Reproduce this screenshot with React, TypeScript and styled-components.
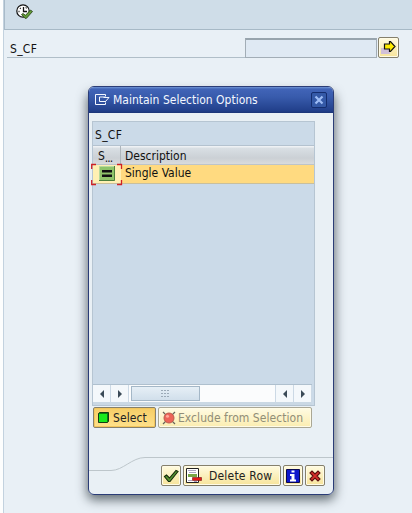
import React from "react";
import styled, { createGlobalStyle } from "styled-components";

const Global = createGlobalStyle`
  * { box-sizing: border-box; }
  body { margin: 0; background: #fff; overflow: hidden; }
  svg { display: block; flex: none; }
`;

const Page = styled.div`
  position: relative;
  width: 412px;
  height: 513px;
  padding-left: 3px;
  font: 12px/16px "DejaVu Sans Condensed", "DejaVu Sans", sans-serif;
  font-stretch: condensed;
  color: #111;
  background: #fdfefe;
`;
const Screen = styled.div`
  height: 100%;
  border-left: 1px solid #c3d2df;
  background: #e9f0f6;
`;
const Toolbar = styled.header`
  height: 30px;
  padding: 4px 0 0 11px;
  background: #cfdde8;
  border-left: 1px solid #a9bbc9;
  border-bottom: 1px solid #a7b9c6;
`;
const Criteria = styled.div`
  display: flex;
  padding: 7px 0 0 3px;
`;
const FieldLabel = styled.label`
  width: 238px;
  height: 21px;
  padding: 4px 0 0 3px;
  border-bottom: 1px solid #b0bec8;
  letter-spacing: 0.3px;
`;
const Field = styled.input`
  width: 132px;
  height: 20px;
  margin: 1px 1px 0 0;
  padding: 0;
  border: 1px solid #a2adb6;
  border-top: 2px solid #98a4ad;
  border-radius: 0;
  background: #dfe9f3;
`;
const Button = styled.button<{ $w: number; $on?: boolean; $muted?: boolean; $gap?: number; $pad?: number }>`
  width: ${p => p.$w}px;
  height: 21px;
  flex: none;
  display: flex;
  align-items: center;
  gap: ${p => p.$gap ?? 0}px;
  padding: 0 0 0 ${p => p.$pad ?? 1}px;
  border: 1px solid ${p => (p.$muted ? "#aaa794" : "#85806c")};
  border-radius: 2px;
  background: ${p => p.$on
    ? "linear-gradient(#f5cd65, #ffe18b)"
    : p.$muted ? "linear-gradient(#fffbe3, #fbedb0)" : "linear-gradient(#fffbe0, #f7e49a)"};
  box-shadow: inset 0 0 0 1px ${p => (p.$on ? "#f3c65c" : "#fffbe6")};
  color: ${p => (p.$muted ? "#918e78" : "#222")};
  font: 12px/16px "DejaVu Sans Condensed", "DejaVu Sans", sans-serif;
  font-stretch: condensed;
  white-space: nowrap;
`;
const Caption = styled.span<{ $track?: number }>`
  letter-spacing: ${p => p.$track ?? 0}px;
  white-space: nowrap;
  padding-top: 1px;
`;

const Dialog = styled.section`
  position: absolute;
  left: 88px;
  top: 86px;
  width: 246px;
  height: 409px;
  display: flex;
  flex-direction: column;
  border: 1px solid #2b3d77;
  border-radius: 6px;
  overflow: hidden;
  background: #e9f0f5;
`;
const DialogShadow = styled.div`
  position: absolute;
  left: 88px;
  top: 90px;
  width: 246px;
  height: 405px;
  border-radius: 6px;
  box-shadow: 0 4px 11px 1px rgba(55, 65, 72, 0.75);
`;
const TitleBar = styled.header`
  height: 26px;
  flex: none;
  display: flex;
  align-items: center;
  padding: 0 6px 0 6px;
  color: #f3f7ff;
  background: linear-gradient(#7094d4 0, #4164b8 2px, #385bac 10px, #213f8a 24px, #1b3577);
`;
const TitleText = styled.h1`
  flex: 1;
  margin: 0 0 0 3px;
  font: inherit;
  white-space: nowrap;
`;
const CloseButton = styled.button`
  width: 16px;
  height: 16px;
  padding: 0;
  border: 1px solid #142d6e;
  border-radius: 2px;
  background: #3459a7;
  display: grid;
  place-items: center;
`;
const Body = styled.div`
  padding: 8px 0 0 3px;
`;
const Grid = styled.div`
  width: 223px;
  height: 285px;
  display: flex;
  flex-direction: column;
  border: 1px solid #b6c5d2;
  background: #cbdae8;
`;
const GridTitle = styled.div`
  height: 23px;
  padding: 5px 0 0 2px;
  letter-spacing: 0.3px;
`;
const HeadRow = styled.div`
  height: 20px;
  display: flex;
  border-top: 1px solid #b4c2cf;
  border-bottom: 1px solid #bdc4c9;
  background: linear-gradient(#eef1f4 0 1px, #d9dfe4 2px, #cbd0d5 12px, #d9dbdc);
`;
const HeadCell = styled.div<{ $w?: number; $pad: number }>`
  width: ${p => (p.$w ? p.$w + "px" : "auto")};
  padding: 2px 0 0 ${p => p.$pad}px;
  border-right: ${p => (p.$w ? "1px solid #aeb5bb" : "none")};
`;
const Dots = styled.span`
  letter-spacing: -1px;
  vertical-align: -2px;
  line-height: 1;
`;
const Row = styled.div`
  height: 19px;
  display: flex;
  background: #ffda80;
  border-bottom: 1px solid #c9bf9c;
`;
const SignCell = styled.div`
  width: 28px;
  background: #fff0b3;
`;
const FocusMark = styled.svg`
  margin: -2px 0 0 -2px;
  position: relative;
`;
const ValueCell = styled.div`
  flex: 1;
  padding: 0 0 0 4px;
`;
const Filler = styled.div`
  flex: 1;
`;
const ScrollBar = styled.div`
  height: 21px;
  display: flex;
  border-top: 1px solid #afc0ce;
  border-bottom: 3px solid #cad8e4;
  margin-right: 2px;
  background: #fbfcfd;
`;
const Arrow = styled.div`
  width: 18px;
  display: grid;
  place-items: center;
  border-right: 1px solid #ccd9e5;
  background: #f4f8fb;
`;
const Thumb = styled.div`
  width: 69px;
  height: 15px;
  margin: 1px 0 0 2px;
  display: grid;
  place-items: center;
  border: 1px solid #a4b7c7;
  background: linear-gradient(#e6eff6, #d1dfeb);
`;
const Track = styled.div`
  flex: 1;
  border-right: 1px solid #ccd9e5;
`;
const Actions = styled.div`
  display: flex;
  gap: 2px;
  padding: 1px 0 0 1px;
`;
const Footer = styled.footer`
  margin-top: 28px;
`;
const FooterButtons = styled.div`
  display: flex;
  gap: 2px;
  margin: -7px 0 0 72px;
`;

const ExecuteIcon = () => (
  <svg width="18" height="18" viewBox="0 0 18 18">
    <circle cx="7" cy="7" r="6.200" fill="#fff" stroke="#111" strokeWidth="1.2" />
    <path d="M7.500 3v4.500H11M2.500 7.500h1M7.500 11v1M4 4l.7.7M10.500 3.500l-.7.7" stroke="#111" strokeWidth="1.3" fill="none" />
    <path d="M5.500 10.500l1.500-1 2.500 1.800L14.500 6l2 1.500-6 6.800H9z" fill="#629c38" stroke="#243b12" strokeWidth=".8" />
  </svg>
);
const ArrowIcon = () => (
  <svg width="17" height="17" viewBox="0 0 17 17">
    <path d="M1 9h9v6H1z" fill="#d1c0d8" />
    <path d="M4.500 5h5V2.500h1L15 7.500l-4.500 5h-1V10h-5z" fill="#ffec00" stroke="#111" strokeWidth="1.2" />
  </svg>
);
const WindowIcon = () => (
  <svg width="15" height="12" viewBox="0 0 15 12" fill="none" stroke="#f3f7ff">
    <path d="M10.500 2.500v-2H.5v10h10v-2" />
    <path d="M10 3H4.500v4.500H10M8.500 3.500h5.500L10 8" />
  </svg>
);
const CloseIcon = () => (
  <svg width="10" height="10" viewBox="0 0 10 10">
    <path d="M1.500 1.500l7 7M8.500 1.500l-7 7" stroke="#9ebcf5" strokeWidth="2.200" />
  </svg>
);
const EqualMark = () => (
  <FocusMark width="32" height="23" viewBox="0 0 32 23">
    <path d="M8.500 3.500h15v14h-15z" fill="#8fc46a" stroke="#b7d99b" />
    <path d="M8 17.500h15.500V3" fill="none" stroke="#4d803b" />
    <path d="M11 7h10v2.500H11zM11 11.500h10V14H11z" fill="#111" />
    <path d="M.7 6V1.500H5M26 1.500h4.500V6M.7 17v4.500H5M26 21.500h4.500V17" fill="none" stroke="#cf2025" strokeWidth="1.3" />
  </FocusMark>
);
const ScrollArrow = ({ right }: { right?: boolean }) => (
  <svg width="6" height="8" viewBox="0 0 6 8">
    <path d={right ? "M1 0l4 4-4 4z" : "M5 0L1 4l4 4z"} fill="#3b4a57" />
  </svg>
);
const Grip = () => (
  <svg width="9" height="7" viewBox="0 0 9 7" fill="#9caab7">
    {[0, 3, 6].map(y => [0, 3, 6].map(x => <rect key={`${x}${y}`} x={x} y={y} width="2" height="1" />))}
  </svg>
);
const GreenIcon = () => (
  <svg width="11" height="11" viewBox="0 0 11 11">
    <path d="M1.500.5h9v9l-1 1h-9v-9z" fill="#087d10" stroke="#123b14" />
    <path d="M1 2h8v8H1z" fill="#18ea1c" />
  </svg>
);
const RedIcon = () => (
  <svg width="14" height="14" viewBox="0 0 14 14">
    <path d="M1 1l12 12M13 1L1 13" stroke="#67645a" strokeWidth="1.2" />
    <circle cx="7" cy="7" r="5" fill="#ed6358" stroke="#bb5b4c" />
    <circle cx="5.500" cy="5.300" r="1.5" fill="#ffaa9a" />
  </svg>
);
const CheckIcon = () => (
  <svg width="16" height="16" viewBox="0 0 16 16">
    <path d="M1.500 8.500l2-1.500 3 3L13 2.500l2 1L7 13.500H5.500z" fill="#579332" stroke="#142b0a" strokeWidth="1.1" />
  </svg>
);
const DeleteRowIcon = () => (
  <svg width="17" height="16" viewBox="0 0 17 16">
    <path d="M1.500 .5h12v14h-12z" fill="#fff" stroke="#222" />
    <path d="M3 2.500h8M4 4.500h7M3 12.500h4M9 13.500h3" stroke="#aaa5c0" />
    <path d="M3 6h9v3H3z" fill="#79a747" />
    <path d="M7.500 9.500h9v3h-9z" fill="#e21818" stroke="#761111" strokeWidth=".6" />
  </svg>
);
const InfoIcon = () => (
  <svg width="16" height="16" viewBox="0 0 16 16">
    <path d="M1.500 1.500h13v13h-13z" fill="#1018cc" stroke="#080850" />
    <path d="M6.500 2.500h3v2h-3zM5 6h4.500v5.500H11v2H5v-2h1.500V8H5z" fill="#fff" />
  </svg>
);
const CancelIcon = () => (
  <svg width="14" height="14" viewBox="0 0 14 14">
    <path d="M2 4l2-2 3 3 3-3 2 2-3 3 3 3-2 2-3-3-3 3-2-2 3-3z" fill="#d7302b" stroke="#5d100f" strokeWidth="1.1" />
  </svg>
);

export default function App() {
  return (
    <Page>
      <Global />
      <Screen>
        <Toolbar><ExecuteIcon /></Toolbar>
        <Criteria>
          <FieldLabel htmlFor="s-cf">S_CF</FieldLabel>
          <Field id="s-cf" />
          <Button $w={21} aria-label="Multiple selection"><ArrowIcon /></Button>
        </Criteria>
      </Screen>
      <DialogShadow />
      <Dialog role="dialog">
        <TitleBar>
          <WindowIcon />
          <TitleText><Caption>Maintain Selection Options</Caption></TitleText>
          <CloseButton aria-label="Close"><CloseIcon /></CloseButton>
        </TitleBar>
        <Body>
          <Grid>
            <GridTitle>S_CF</GridTitle>
            <HeadRow>
              <HeadCell $w={28} $pad={5}>S<Dots>...</Dots></HeadCell>
              <HeadCell $pad={4}>Description</HeadCell>
            </HeadRow>
            <Row>
              <SignCell><EqualMark /></SignCell>
              <ValueCell>Single Value</ValueCell>
            </Row>
            <Filler />
            <ScrollBar>
              <Arrow><ScrollArrow /></Arrow>
              <Arrow><ScrollArrow right /></Arrow>
              <Thumb><Grip /></Thumb>
              <Track />
              <Arrow><ScrollArrow /></Arrow>
              <Arrow><ScrollArrow right /></Arrow>
            </ScrollBar>
          </Grid>
          <Actions>
            <Button $w={63} $on $pad={4} $gap={4}><GreenIcon /><Caption $track={0.1}>Select</Caption></Button>
            <Button $w={154} $muted $pad={3} $gap={2}><RedIcon /><Caption $track={0.05}>Exclude from Selection</Caption></Button>
          </Actions>
        </Body>
        <Footer>
          <svg width="244" height="16" viewBox="0 0 244 16">
            <path d="M0 14.500h22c12 0 21-13 34-13h188" fill="none" stroke="#bdc6cb" />
          </svg>
          <FooterButtons>
            <Button $w={20} aria-label="Confirm"><CheckIcon /></Button>
            <Button $w={98} $gap={7}><DeleteRowIcon /><Caption $track={0.2}>Delete Row</Caption></Button>
            <Button $w={20} aria-label="Information"><InfoIcon /></Button>
            <Button $w={20} $pad={2} aria-label="Cancel"><CancelIcon /></Button>
          </FooterButtons>
        </Footer>
      </Dialog>
    </Page>
  );
}
